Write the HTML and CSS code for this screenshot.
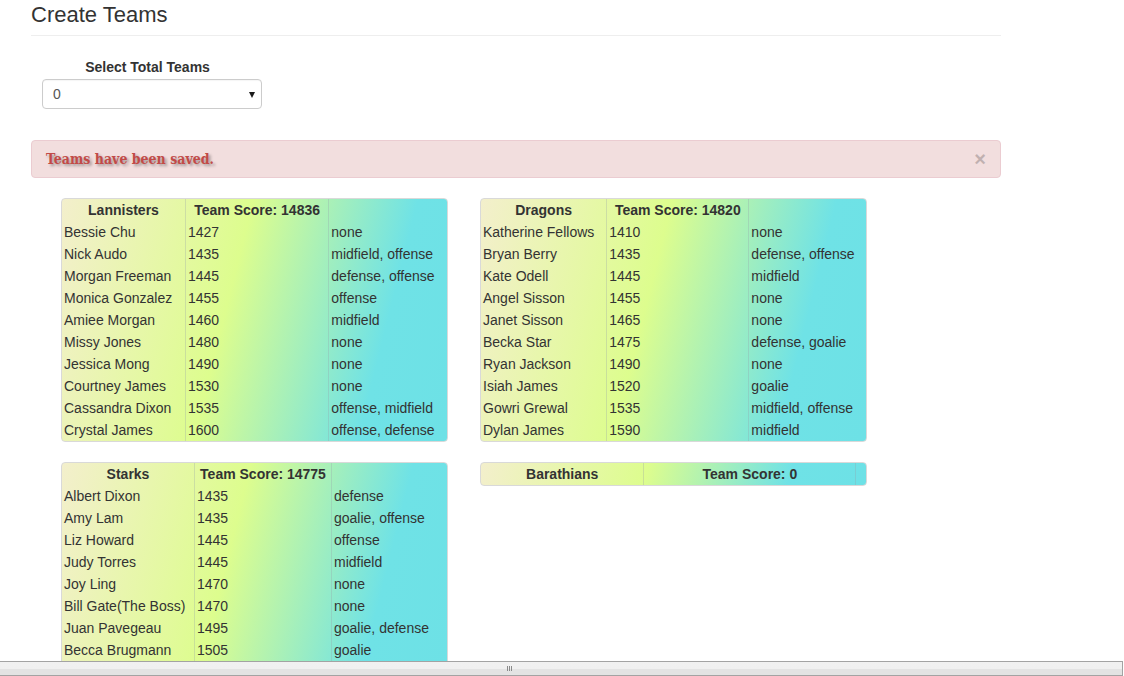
FILE: index.html
```html
<!DOCTYPE html>
<html lang="en">
<head>
<meta charset="utf-8">
<title>Create Teams</title>
<link rel="stylesheet" href="styles.css">
</head>
<body>
<div class="page">
  <div class="page-header">
    <h1 class="title">Create Teams</h1>
  </div>

  <div class="team-select">
    <label class="select-label" for="total">Select Total Teams</label>
    <div class="select-wrap">
      <select id="total" class="select">
        <option>0</option>
        <option>1</option>
        <option>2</option>
        <option>3</option>
        <option>4</option>
      </select>
    </div>
  </div>

  <div class="alert">
    <span class="alert-text">Teams have been saved.</span>
    <button class="close" type="button">×</button>
  </div>

  <div class="teams">
    <table class="team">
      <thead>
        <tr><th>Lannisters</th><th>Team Score: 14836</th><th></th></tr>
      </thead>
      <tbody>
        <tr><td>Bessie Chu</td><td>1427</td><td>none</td></tr>
        <tr><td>Nick Audo</td><td>1435</td><td>midfield, offense</td></tr>
        <tr><td>Morgan Freeman</td><td>1445</td><td>defense, offense</td></tr>
        <tr><td>Monica Gonzalez</td><td>1455</td><td>offense</td></tr>
        <tr><td>Amiee Morgan</td><td>1460</td><td>midfield</td></tr>
        <tr><td>Missy Jones</td><td>1480</td><td>none</td></tr>
        <tr><td>Jessica Mong</td><td>1490</td><td>none</td></tr>
        <tr><td>Courtney James</td><td>1530</td><td>none</td></tr>
        <tr><td>Cassandra Dixon</td><td>1535</td><td>offense, midfield</td></tr>
        <tr><td>Crystal James</td><td>1600</td><td>offense, defense</td></tr>
      </tbody>
    </table>

    <table class="team">
      <thead>
        <tr><th>Dragons</th><th>Team Score: 14820</th><th></th></tr>
      </thead>
      <tbody>
        <tr><td>Katherine Fellows</td><td>1410</td><td>none</td></tr>
        <tr><td>Bryan Berry</td><td>1435</td><td>defense, offense</td></tr>
        <tr><td>Kate Odell</td><td>1445</td><td>midfield</td></tr>
        <tr><td>Angel Sisson</td><td>1455</td><td>none</td></tr>
        <tr><td>Janet Sisson</td><td>1465</td><td>none</td></tr>
        <tr><td>Becka Star</td><td>1475</td><td>defense, goalie</td></tr>
        <tr><td>Ryan Jackson</td><td>1490</td><td>none</td></tr>
        <tr><td>Isiah James</td><td>1520</td><td>goalie</td></tr>
        <tr><td>Gowri Grewal</td><td>1535</td><td>midfield, offense</td></tr>
        <tr><td>Dylan James</td><td>1590</td><td>midfield</td></tr>
      </tbody>
    </table>

    <table class="team team-fixed">
      <colgroup>
        <col class="col-name">
        <col class="col-score">
        <col class="col-pos">
      </colgroup>
      <thead>
        <tr><th>Starks</th><th>Team Score: 14775</th><th></th></tr>
      </thead>
      <tbody>
        <tr><td>Albert Dixon</td><td>1435</td><td>defense</td></tr>
        <tr><td>Amy Lam</td><td>1435</td><td>goalie, offense</td></tr>
        <tr><td>Liz Howard</td><td>1445</td><td>offense</td></tr>
        <tr><td>Judy Torres</td><td>1445</td><td>midfield</td></tr>
        <tr><td>Joy Ling</td><td>1470</td><td>none</td></tr>
        <tr><td>Bill Gate(The Boss)</td><td>1470</td><td>none</td></tr>
        <tr><td>Juan Pavegeau</td><td>1495</td><td>goalie, defense</td></tr>
        <tr><td>Becca Brugmann</td><td>1505</td><td>goalie</td></tr>
        <tr><td>&nbsp;</td><td>&nbsp;</td><td>&nbsp;</td></tr>
      </tbody>
    </table>

    <table class="team">
      <thead>
        <tr><th>Barathians</th><th>Team Score: 0</th><th></th></tr>
      </thead>
    </table>
  </div>
</div>

<div class="splitter"><span class="grip"></span></div>
</body>
</html>
```

FILE: styles.css
```css
html, body {
  margin: 0;
  padding: 0;
  height: 100%;
  overflow: hidden;
  background: #ffffff;
}

body {
  font-family: "Liberation Sans", Arial, Helvetica, sans-serif;
  font-size: 14px;
  line-height: 20px;
  color: #333333;
}

.page {
  width: 970px;
  margin-left: 31px;
}

.page-header {
  padding-top: 3px;
  padding-bottom: 8px;
  border-bottom: 1px solid #eeeeee;
}

.title {
  margin: 0;
  font-size: 22px;
  line-height: 24px;
  font-weight: normal;
  color: #333333;
}

.team-select {
  margin-top: 21px;
  margin-left: 11px;
  width: 220px;
}

.select-label {
  display: block;
  text-align: center;
  padding-right: 9px;
  font-weight: bold;
  line-height: 20px;
}

.select-wrap {
  position: relative;
  margin-top: 2px;
}

.select {
  display: block;
  width: 220px;
  height: 30px;
  margin: 0;
  padding: 0 20px 0 10px;
  border: 1px solid #cccccc;
  border-radius: 4px;
  background: #ffffff;
  font-family: "Liberation Sans", Arial, sans-serif;
  font-size: 14px;
  color: #555555;
  -webkit-appearance: none;
  appearance: none;
  box-shadow: inset 0 1px 1px rgba(0, 0, 0, 0.04);
}

.select-wrap::after {
  content: "";
  position: absolute;
  right: 7px;
  top: 13px;
  width: 0;
  height: 0;
  border-left: 3.5px solid transparent;
  border-right: 3.5px solid transparent;
  border-top: 6px solid #1a1a1a;
  pointer-events: none;
}

.alert {
  display: flex;
  align-items: center;
  justify-content: space-between;
  margin-top: 31px;
  padding: 8px 14px;
  border: 1px solid #ebccd1;
  border-radius: 4px;
  background: #f2dede;
}

.alert-text {
  font-family: "DejaVu Serif Condensed", "DejaVu Serif", serif;
  font-weight: bold;
  font-size: 14px;
  line-height: 20px;
  color: #c24a47;
  text-shadow: 2px 2px 3px rgba(0, 0, 0, 0.35);
}

.close {
  margin: 0;
  padding: 0;
  border: 0;
  background: transparent;
  font-family: "Liberation Sans", Arial, sans-serif;
  font-size: 20px;
  font-weight: bold;
  line-height: 20px;
  color: #000000;
  opacity: 0.2;
  cursor: pointer;
}

.teams {
  display: grid;
  grid-template-columns: 387px 387px;
  column-gap: 32px;
  row-gap: 20px;
  align-items: start;
  margin-top: 20px;
  margin-left: 30px;
}

.team {
  width: 100%;
  border-collapse: separate;
  border-spacing: 0;
  border: 1px solid #d9d9d9;
  border-radius: 4px;
  background: linear-gradient(104deg, #f3efcc 0%, #ddfd8e 43%, #6fe2e6 80%, #6de1e6 100%);
}

.team-fixed {
  table-layout: fixed;
}

.team-fixed .col-name {
  width: 132px;
}

.team-fixed .col-score {
  width: 137px;
}

.team th,
.team td {
  padding: 1px 2px;
  line-height: 20px;
  white-space: nowrap;
}

.team th {
  text-align: center;
  font-weight: bold;
}

.team td {
  text-align: left;
}

.team th + th,
.team td + td {
  border-left: 1px solid rgba(150, 160, 170, 0.3);
}

.splitter {
  position: fixed;
  left: 0;
  right: 1px;
  bottom: 0;
  height: 13px;
  border: 1px solid #a3a3a3;
  border-left: 0;
  background: linear-gradient(#f1f1f1 0%, #f0f0f0 50%, #e3e3e3 51%, #e3e3e3 100%);
}

.grip {
  position: absolute;
  left: 507px;
  top: 4px;
  width: 5px;
  height: 5px;
  background: repeating-linear-gradient(90deg, #8a8a8a 0, #8a8a8a 1px, transparent 1px, transparent 2px);
}
```
